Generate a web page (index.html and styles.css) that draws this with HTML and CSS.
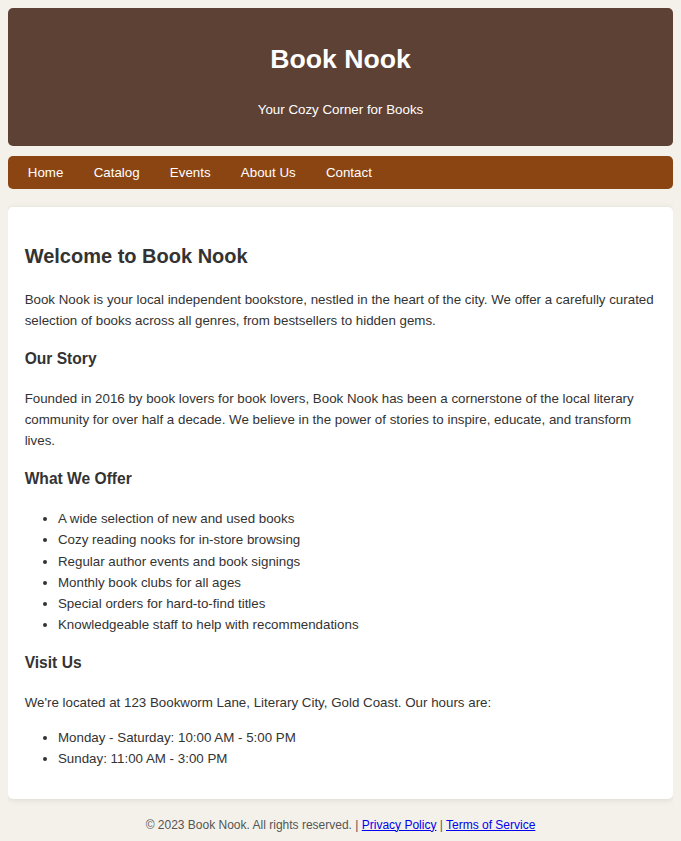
FILE: index.html
```html
<!DOCTYPE html>
<html lang="en">
<head>
<meta charset="utf-8">
<title>Book Nook</title>
<link rel="stylesheet" href="styles.css">
</head>
<body>
<header class="site-header">
  <h1 class="site-title">Book Nook</h1>
  <p class="site-tagline">Your Cozy Corner for Books</p>
</header>
<nav class="site-nav">
  <a href="#" class="nav-link">Home</a>
  <a href="#" class="nav-link">Catalog</a>
  <a href="#" class="nav-link">Events</a>
  <a href="#" class="nav-link">About Us</a>
  <a href="#" class="nav-link">Contact</a>
</nav>
<main class="content">
  <h2 class="page-title">Welcome to Book Nook</h2>
  <p>Book Nook is your local independent bookstore, nestled in the heart of the city. We offer a carefully curated selection of books across all genres, from bestsellers to hidden gems.</p>
  <h3 class="section-title">Our Story</h3>
  <p>Founded in 2016 by book lovers for book lovers, Book Nook has been a cornerstone of the local literary community for over half a decade. We believe in the power of stories to inspire, educate, and transform lives.</p>
  <h3 class="section-title">What We Offer</h3>
  <ul class="list">
    <li>A wide selection of new and used books</li>
    <li>Cozy reading nooks for in-store browsing</li>
    <li>Regular author events and book signings</li>
    <li>Monthly book clubs for all ages</li>
    <li>Special orders for hard-to-find titles</li>
    <li>Knowledgeable staff to help with recommendations</li>
  </ul>
  <h3 class="section-title">Visit Us</h3>
  <p>We're located at 123 Bookworm Lane, Literary City, Gold Coast. Our hours are:</p>
  <ul class="list">
    <li>Monday - Saturday: 10:00 AM - 5:00 PM</li>
    <li>Sunday: 11:00 AM - 3:00 PM</li>
  </ul>
</main>
<footer class="site-footer">
  &copy; 2023 Book Nook. All rights reserved. | <a href="#" class="footer-link">Privacy Policy</a> | <a href="#" class="footer-link">Terms of Service</a>
</footer>
</body>
</html>
```

FILE: styles.css
```css
html {
  background: #f4f1ea;
}
body {
  margin: 8px;
  font-family: "Liberation Sans", Arial, sans-serif;
  font-size: 13.333px;
  line-height: 1.6;
  color: #333;
  background: #f4f1ea;
}
.site-header {
  background: #5d4134;
  color: #fff;
  text-align: center;
  padding: 12.5px 16.67px;
  border-radius: 5px;
  margin-bottom: 9.5px;
}
.site-title {
  font-size: 26.667px;
  margin: 17.87px 0;
}
.site-tagline {
  margin: 13.33px 0;
}
.site-nav {
  background: #8b4513;
  border-radius: 5px;
  display: flex;
  gap: 3.6px;
  padding: 0 6.5px;
  margin-bottom: 18px;
}
.nav-link {
  color: #fff;
  text-decoration: none;
  padding: 6.6px 13.33px 5.8px;
}
.content {
  display: block;
  background: #fff;
  border-radius: 5px;
  padding: 16.67px;
  box-shadow: 0 1px 6px rgba(0, 0, 0, 0.1);
}
.page-title {
  font-size: 20px;
  margin: 16.6px 0;
}
.section-title {
  font-size: 15.6px;
  margin: 15.6px 0;
}
.content p {
  margin: 13.33px 0;
}
.list {
  margin: 13.33px 0;
  padding-left: 33.33px;
}
.site-footer {
  text-align: center;
  font-size: 12px;
  color: #555;
  padding: 16.4px 0 8px;
}
.footer-link {
  color: #0000ee;
}
```
